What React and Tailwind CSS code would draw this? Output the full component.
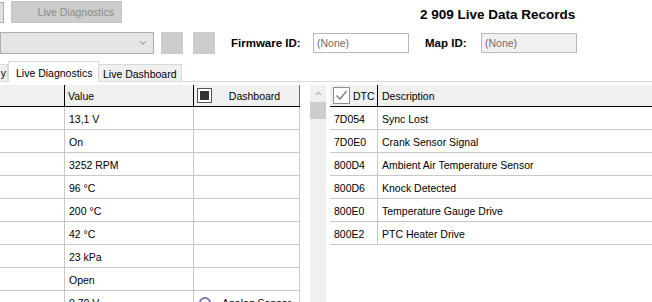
import { ChevronDown, ChevronUp } from 'lucide-react';

const values = ['13,1 V', 'On', '3252 RPM', '96 °C', '200 °C', '42 °C', '23 kPa', 'Open'];

const dtcs = [
  ['7D054', 'Sync Lost'],
  ['7D0E0', 'Crank Sensor Signal'],
  ['800D4', 'Ambient Air Temperature Sensor'],
  ['800D6', 'Knock Detected'],
  ['800E0', 'Temperature Gauge Drive'],
  ['800E2', 'PTC Heater Drive'],
];

function CheckedBox() {
  return (
    <svg width="17" height="17" viewBox="0 0 17 17" className="shrink-0">
      <rect x="0.5" y="0.5" width="16" height="16" fill="#fff" stroke="#8f8f8f" />
      <polyline points="3.5,8.5 7,12 13.5,4" fill="none" stroke="#8a8a8a" strokeWidth="1.6" />
    </svg>
  );
}

function FilledBox() {
  return (
    <div className="flex h-[15px] w-[15px] shrink-0 items-center justify-center border border-[#555] bg-white">
      <div className="h-[9px] w-[9px] bg-[#333]" />
    </div>
  );
}

export default function App() {
  return (
    <div className="flex h-[302px] w-[652px] flex-col overflow-hidden bg-white font-['Liberation_Sans',Arial,sans-serif] text-[10.5px] leading-[14px] text-black">
      {/* toolbar */}
      <div className="flex h-[24px] items-start">
        <div className="mt-[2px] h-[21px] w-[4px] border-y border-r border-[#adadad] bg-[#e1e1e1]" />
        <div className="ml-[7px] mt-[1px] flex h-[22px] w-[111px] items-center justify-end border border-[#c4c4c4] bg-[#cccccc] pr-[7px] text-[#8a8a8a]">
          Live Diagnostics
        </div>
        <div className="ml-[298px] mt-[7px] text-[13.5px] font-bold leading-[16px]">2 909 Live Data Records</div>
      </div>

      <div className="mt-[9px] flex h-[22px] items-center">
        <div className="flex h-[22px] w-[154px] items-center justify-end border border-[#adadad] bg-[#e5e5e5] pr-[5px]">
          <ChevronDown size={10} strokeWidth={1.5} color="#444" />
        </div>
        <div className="ml-[7px] h-[22px] w-[22px] bg-[#cccccc]" />
        <div className="ml-[10px] h-[22px] w-[22px] bg-[#cccccc]" />
        <div className="ml-[16px] w-[82px] text-[11.5px] font-bold">Firmware ID:</div>
        <div className="flex h-[20px] w-[96px] items-center border border-[#b9b9b9] pl-[3px] text-[#6d6d6d]">(None)</div>
        <div className="ml-[16px] w-[56px] text-[11.5px] font-bold">Map ID:</div>
        <div className="flex h-[20px] w-[96px] items-center border border-[#b9b9b9] bg-[#f0f0f0] pl-[3px] text-[#6d6d6d]">(None)</div>
      </div>

      {/* tabs */}
      <div className="mt-[7px] flex h-[21px] items-end border-b border-[#d9d9d9]">
        <div className="flex h-[17px] w-[8px] items-center justify-end overflow-hidden border-t border-r border-[#d9d9d9] bg-[#f0f0f0] pr-[1px]">
          y
        </div>
        <div className="relative z-10 -mb-px flex h-[21px] w-[91px] items-start border-x border-t border-[#d9d9d9] bg-white pl-[7px] pt-[4px]">
          Live Diagnostics
        </div>
        <div className="flex h-[17px] w-[83px] items-center border-t border-r border-[#d9d9d9] bg-[#f0f0f0] pl-[4px] pt-[1px]">
          Live Dashboard
        </div>
      </div>

      {/* grids */}
      <div className="mt-[3px] flex flex-1">
        <div className="flex w-[300px] flex-col">
          <div className="flex h-[22px] border-b border-black bg-[#f0f0f0]">
            <div className="w-[65px] border-r border-black" />
            <div className="flex w-[129px] items-center border-r border-black pl-[3px] pt-px">Value</div>
            <div className="flex flex-1 items-center border-r border-[#6d6d6d] pl-[3px]">
              <FilledBox />
              <span className="flex-1 pr-[2px] pt-px text-center">Dashboard</span>
            </div>
          </div>
          {values.map((v) => (
            <div key={v} className="flex h-[23px] shrink-0 border-b border-[#c8c8c8]">
              <div className="w-[65px] border-r border-[#c8c8c8]" />
              <div className="flex w-[129px] items-center border-r border-[#c8c8c8] pl-[4px] pt-px">{v}</div>
              <div className="flex-1 border-r border-[#c8c8c8]" />
            </div>
          ))}
          <div className="flex h-[23px] shrink-0">
            <div className="w-[65px] border-r border-[#c8c8c8]" />
            <div className="flex w-[129px] items-center border-r border-[#c8c8c8] pl-[4px] pt-px">0,70 V</div>
            <div className="flex flex-1 items-center gap-[11px] border-r border-[#c8c8c8] pl-[5px]">
              <div className="h-[12px] w-[12px] rounded-full border-2 border-[#7b73b8] bg-white" />
              <span>Analog Sensor</span>
            </div>
          </div>
        </div>

        <div className="ml-[10px] flex w-[16px] flex-col bg-[#f0f0f0]">
          <div className="flex h-[17px] items-center justify-center">
            <ChevronUp size={9} strokeWidth={2} color="#606060" />
          </div>
          <div className="h-[17px] bg-[#cdcdcd]" />
        </div>

        <div className="ml-[4px] flex flex-1 flex-col">
          <div className="flex h-[22px] border-b border-black bg-[#f0f0f0]">
            <div className="flex w-[48px] items-center gap-[3px] border-r border-black pl-[3px]">
              <CheckedBox />
              <span className="pt-px">DTC</span>
            </div>
            <div className="flex flex-1 items-center pl-[4px] pt-px">Description</div>
          </div>
          {dtcs.map(([code, desc]) => (
            <div key={code} className="flex h-[23px] shrink-0 border-b border-[#c8c8c8]">
              <div className="flex w-[48px] items-center border-r border-[#c8c8c8] pl-[4px] pt-px">{code}</div>
              <div className="flex flex-1 items-center pl-[4px] pt-px">{desc}</div>
            </div>
          ))}
        </div>
      </div>
    </div>
  );
}
